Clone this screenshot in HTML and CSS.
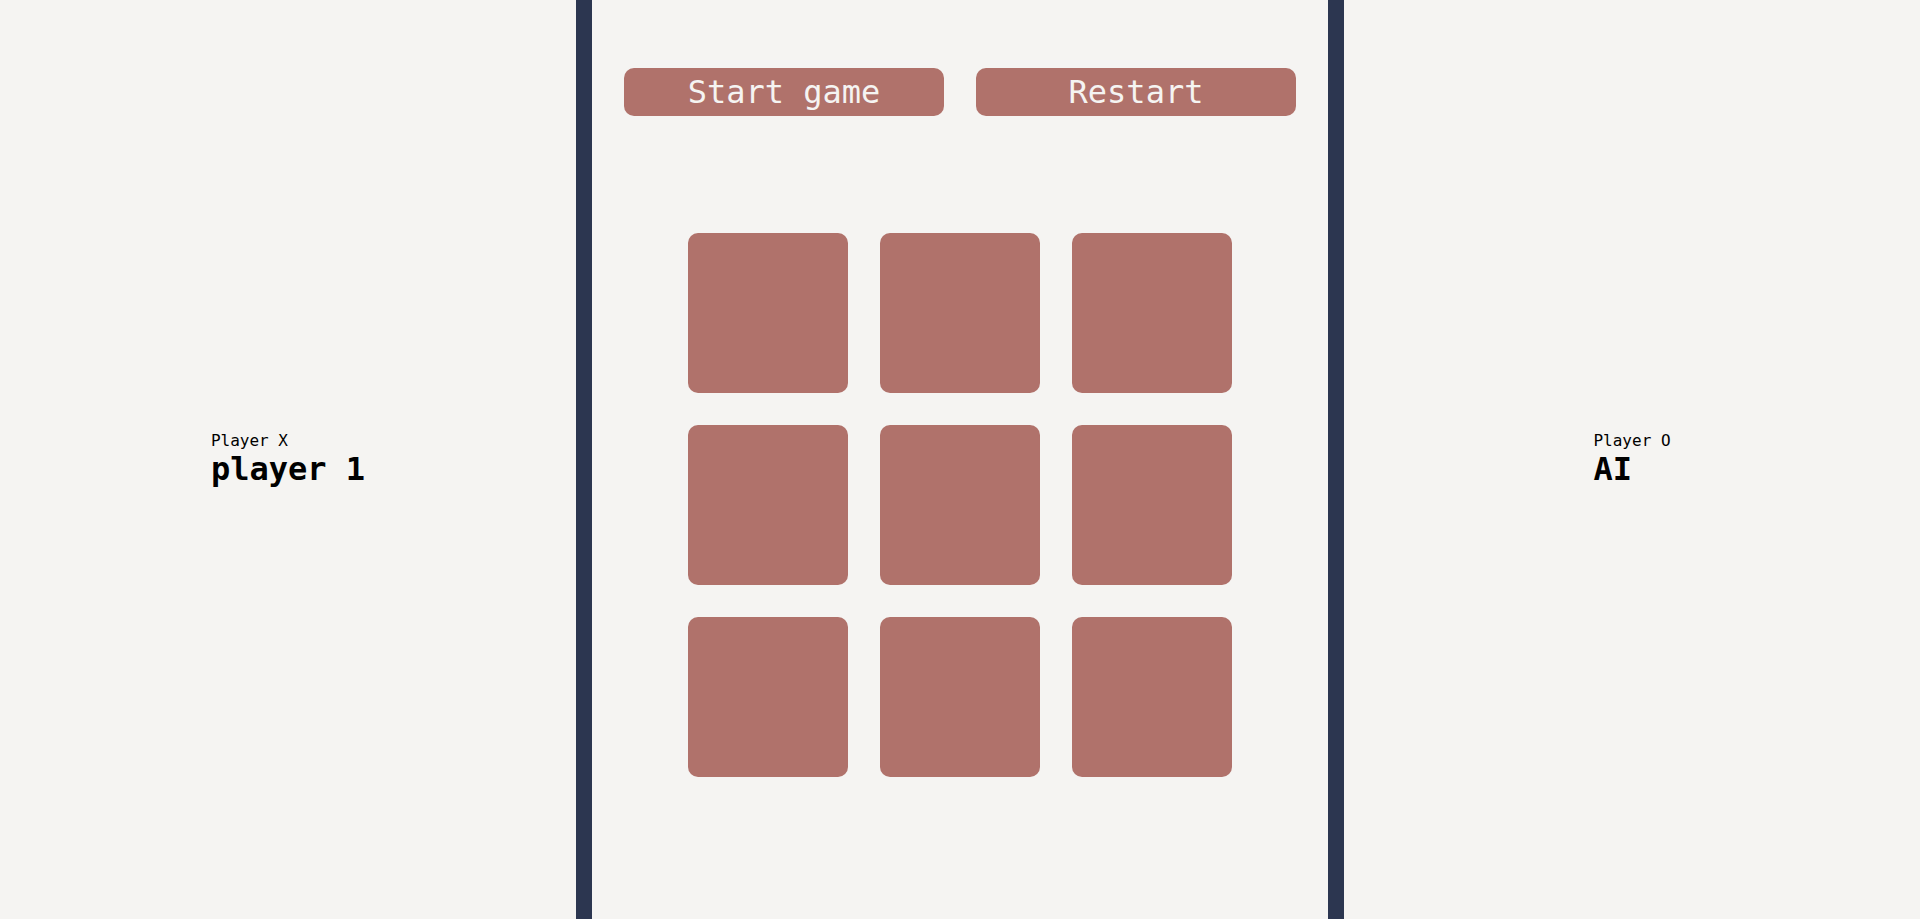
FILE: index.html
```html
<!DOCTYPE html>
<html lang="en">
<head>
<meta charset="utf-8">
<title>Tic Tac Toe</title>
<link rel="stylesheet" href="styles.css">
</head>
<body>
<div class="layout">
  <section class="side">
    <div class="player">
      <div class="player-label">Player X</div>
      <div class="player-name">player 1</div>
    </div>
  </section>
  <main class="center">
    <div class="controls">
      <button class="btn">Start game</button>
      <button class="btn">Restart</button>
    </div>
    <div class="board">
      <div class="cell"></div>
      <div class="cell"></div>
      <div class="cell"></div>
      <div class="cell"></div>
      <div class="cell"></div>
      <div class="cell"></div>
      <div class="cell"></div>
      <div class="cell"></div>
      <div class="cell"></div>
    </div>
  </main>
  <section class="side">
    <div class="player">
      <div class="player-label">Player O</div>
      <div class="player-name">AI</div>
    </div>
  </section>
</div>
</body>
</html>
```

FILE: styles.css
```css
* {
  box-sizing: border-box;
}

html, body {
  margin: 0;
  padding: 0;
  height: 100%;
}

body {
  background: #f5f4f2;
  font-family: "DejaVu Sans Mono", "Liberation Mono", monospace;
  color: #000;
}

.layout {
  display: grid;
  grid-template-columns: 576px 1fr 576px;
  height: 919px;
}

.side {
  display: flex;
  align-items: center;
  justify-content: center;
}

.player-label {
  font-size: 16px;
}

.player-name {
  font-size: 32px;
  font-weight: bold;
}

.center {
  border-left: 16px solid #2c3650;
  border-right: 16px solid #2c3650;
  padding: 68px 32px 0;
  display: flex;
  flex-direction: column;
  align-items: center;
}

.controls {
  display: flex;
  gap: 32px;
  width: 100%;
}

.btn {
  flex: 1;
  height: 48px;
  border: none;
  border-radius: 10px;
  background: #b0726b;
  color: #f5f4f2;
  font-family: "DejaVu Sans Mono", "Liberation Mono", monospace;
  font-size: 32px;
  padding: 0;
  display: flex;
  align-items: center;
  justify-content: center;
}

.board {
  margin-top: 116.5px;
  display: grid;
  grid-template-columns: repeat(3, 160px);
  grid-auto-rows: 160px;
  gap: 32px;
}

.cell {
  background: #b0726b;
  border-radius: 10px;
}
```
